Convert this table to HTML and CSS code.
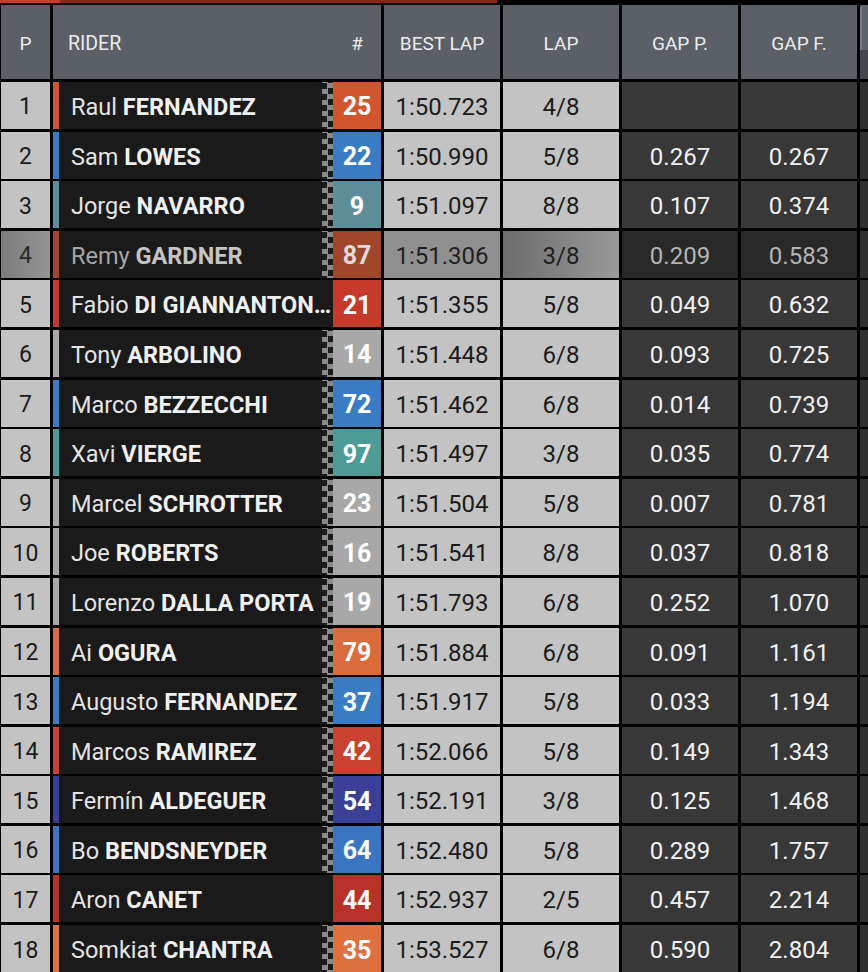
FILE: index.html
```html
<!DOCTYPE html>
<html lang="en">
<head>
<meta charset="utf-8">
<title>Timing</title>
<link rel="stylesheet" href="styles.css">
</head>
<body>
<div class="topbar"></div>
<div class="board">
  <div class="row head">
    <div class="hc">P</div>
    <div class="hc hrider"><span class="hlabel">RIDER</span><span class="hnum">#</span></div>
    <div class="hc">BEST LAP</div>
    <div class="hc">LAP</div>
    <div class="hc">GAP P.</div>
    <div class="hc">GAP F.</div>
    <div class="hc hextra"><span class="hextra-top"></span></div>
  </div>

  <div class="row t-ktm"><div class="pos">1</div><div class="rider"><span class="stripe"></span><div class="name"><span class="fn">Raul</span> FERNANDEZ</div><span class="chk"></span><span class="num">25</span></div><div class="lt">1:50.723</div><div class="lt">4/8</div><div class="dk"></div><div class="dk"></div><div class="ex"></div></div>
  <div class="row t-blue"><div class="pos">2</div><div class="rider"><span class="stripe"></span><div class="name"><span class="fn">Sam</span> LOWES</div><span class="chk"></span><span class="num">22</span></div><div class="lt">1:50.990</div><div class="lt">5/8</div><div class="dk">0.267</div><div class="dk">0.267</div><div class="ex"></div></div>
  <div class="row t-slate"><div class="pos">3</div><div class="rider"><span class="stripe"></span><div class="name"><span class="fn">Jorge</span> NAVARRO</div><span class="chk"></span><span class="num">9</span></div><div class="lt">1:51.097</div><div class="lt">8/8</div><div class="dk">0.107</div><div class="dk">0.374</div><div class="ex"></div></div>
  <div class="row t-dimorange dim"><div class="pos">4</div><div class="rider"><span class="stripe"></span><div class="name"><span class="fn">Remy</span> GARDNER</div><span class="chk"></span><span class="num">87</span></div><div class="lt">1:51.306</div><div class="lt lapdim">3/8</div><div class="dk">0.209</div><div class="dk">0.583</div><div class="ex"></div></div>
  <div class="row t-red nochk"><div class="pos">5</div><div class="rider"><span class="stripe"></span><div class="name"><span class="fn">Fabio</span> DI GIANNANTONIO</div><span class="chk"></span><span class="num">21</span></div><div class="lt">1:51.355</div><div class="lt">5/8</div><div class="dk">0.049</div><div class="dk">0.632</div><div class="ex"></div></div>
  <div class="row t-grey"><div class="pos">6</div><div class="rider"><span class="stripe"></span><div class="name"><span class="fn">Tony</span> ARBOLINO</div><span class="chk"></span><span class="num">14</span></div><div class="lt">1:51.448</div><div class="lt">6/8</div><div class="dk">0.093</div><div class="dk">0.725</div><div class="ex"></div></div>
  <div class="row t-blue"><div class="pos">7</div><div class="rider"><span class="stripe"></span><div class="name"><span class="fn">Marco</span> BEZZECCHI</div><span class="chk"></span><span class="num">72</span></div><div class="lt">1:51.462</div><div class="lt">6/8</div><div class="dk">0.014</div><div class="dk">0.739</div><div class="ex"></div></div>
  <div class="row t-teal"><div class="pos">8</div><div class="rider"><span class="stripe"></span><div class="name"><span class="fn">Xavi</span> VIERGE</div><span class="chk"></span><span class="num">97</span></div><div class="lt">1:51.497</div><div class="lt">3/8</div><div class="dk">0.035</div><div class="dk">0.774</div><div class="ex"></div></div>
  <div class="row t-grey"><div class="pos">9</div><div class="rider"><span class="stripe"></span><div class="name"><span class="fn">Marcel</span> SCHROTTER</div><span class="chk"></span><span class="num">23</span></div><div class="lt">1:51.504</div><div class="lt">5/8</div><div class="dk">0.007</div><div class="dk">0.781</div><div class="ex"></div></div>
  <div class="row t-grey"><div class="pos">10</div><div class="rider"><span class="stripe"></span><div class="name"><span class="fn">Joe</span> ROBERTS</div><span class="chk"></span><span class="num">16</span></div><div class="lt">1:51.541</div><div class="lt">8/8</div><div class="dk">0.037</div><div class="dk">0.818</div><div class="ex"></div></div>
  <div class="row t-grey"><div class="pos">11</div><div class="rider"><span class="stripe"></span><div class="name"><span class="fn">Lorenzo</span> DALLA PORTA</div><span class="chk"></span><span class="num">19</span></div><div class="lt">1:51.793</div><div class="lt">6/8</div><div class="dk">0.252</div><div class="dk">1.070</div><div class="ex"></div></div>
  <div class="row t-orange"><div class="pos">12</div><div class="rider"><span class="stripe"></span><div class="name"><span class="fn">Ai</span> OGURA</div><span class="chk"></span><span class="num">79</span></div><div class="lt">1:51.884</div><div class="lt">6/8</div><div class="dk">0.091</div><div class="dk">1.161</div><div class="ex"></div></div>
  <div class="row t-blue"><div class="pos">13</div><div class="rider"><span class="stripe"></span><div class="name"><span class="fn">Augusto</span> FERNANDEZ</div><span class="chk"></span><span class="num">37</span></div><div class="lt">1:51.917</div><div class="lt">5/8</div><div class="dk">0.033</div><div class="dk">1.194</div><div class="ex"></div></div>
  <div class="row t-red2"><div class="pos">14</div><div class="rider"><span class="stripe"></span><div class="name"><span class="fn">Marcos</span> RAMIREZ</div><span class="chk"></span><span class="num">42</span></div><div class="lt">1:52.066</div><div class="lt">5/8</div><div class="dk">0.149</div><div class="dk">1.343</div><div class="ex"></div></div>
  <div class="row t-navy"><div class="pos">15</div><div class="rider"><span class="stripe"></span><div class="name"><span class="fn">Fermín</span> ALDEGUER</div><span class="chk"></span><span class="num">54</span></div><div class="lt">1:52.191</div><div class="lt">3/8</div><div class="dk">0.125</div><div class="dk">1.468</div><div class="ex"></div></div>
  <div class="row t-blue2"><div class="pos">16</div><div class="rider"><span class="stripe"></span><div class="name"><span class="fn">Bo</span> BENDSNEYDER</div><span class="chk"></span><span class="num">64</span></div><div class="lt">1:52.480</div><div class="lt">5/8</div><div class="dk">0.289</div><div class="dk">1.757</div><div class="ex"></div></div>
  <div class="row t-red3 nochk"><div class="pos">17</div><div class="rider"><span class="stripe"></span><div class="name"><span class="fn">Aron</span> CANET</div><span class="chk"></span><span class="num">44</span></div><div class="lt">1:52.937</div><div class="lt">2/5</div><div class="dk">0.457</div><div class="dk">2.214</div><div class="ex"></div></div>
  <div class="row t-orange2"><div class="pos">18</div><div class="rider"><span class="stripe"></span><div class="name"><span class="fn">Somkiat</span> CHANTRA</div><span class="chk"></span><span class="num">35</span></div><div class="lt">1:53.527</div><div class="lt">6/8</div><div class="dk">0.590</div><div class="dk">2.804</div><div class="ex"></div></div>
</div>
</body>
</html>
```

FILE: styles.css
```css
html, body {
  margin: 0;
  padding: 0;
  background: #000;
}
body {
  width: 868px;
  height: 972px;
  overflow: hidden;
  font-family: Roboto, "Noto Sans", "Liberation Sans", sans-serif;
}
.topbar {
  width: 497px;
  height: 3px;
  margin-bottom: 2px;
  background: linear-gradient(90deg, #c63e2b 0, #c63e2b 60px, #8d2219 60px, #8d2219 100%);
}
.board {
  display: flex;
  flex-direction: column;
  gap: 2.6px;
}
.row {
  display: grid;
  grid-template-columns: 49px 328px 116px 116px 116px 116px 12px;
  column-gap: 3px;
  padding-left: 1px;
  height: 47px;
}
.row.head {
  height: 74.4px;
}
.hc {
  background: #5b5f66;
  color: #ececec;
  font-size: 19px;
  display: flex;
  align-items: center;
  justify-content: center;
  padding-top: 3px;
  box-sizing: border-box;
}
.hrider {
  justify-content: flex-start;
  padding-left: 15px;
}
.hlabel {
  flex: 1;
  font-size: 19.5px;
}
.hnum {
  width: 48px;
  text-align: center;
}
.hextra {
  background: #44474c;
  align-items: flex-start;
  justify-content: flex-start;
  padding: 0;
}
.hextra-top {
  display: block;
  width: 100%;
  height: 45px;
  background: #5f636a;
  border-left: 2px solid #7a7e85;
  border-radius: 4px 0 0 0;
  box-sizing: border-box;
}

.pos, .lt {
  background: #c3c3c3;
  color: #1b1b1b;
  display: flex;
  align-items: center;
  justify-content: center;
  padding-top: 3px;
  box-sizing: border-box;
}
.pos {
  font-size: 23px;
}
.lt {
  font-size: 24px;
}
.dk {
  background: #383838;
  color: #f1f1f1;
  font-size: 24px;
  display: flex;
  align-items: center;
  justify-content: center;
  padding-top: 3px;
  box-sizing: border-box;
}
.ex {
  background: #303030;
}
.rider {
  display: flex;
  background: #1a1a1a;
  min-width: 0;
}
.stripe {
  width: 6px;
  flex: none;
  background: var(--team);
}
.name {
  flex: 1;
  min-width: 0;
  padding-left: 12px;
  padding-top: 3px;
  white-space: nowrap;
  overflow: hidden;
  text-overflow: ellipsis;
  font-size: 23.5px;
  font-weight: 700;
  color: #f0f0f0;
  line-height: 44px;
}
.fn {
  font-weight: 400;
  color: #e4e4e4;
}
.chk {
  width: 11px;
  flex: none;
  background-color: #1a1a1a;
  background-image:
    conic-gradient(#8a8a8a 0 25%, transparent 0 50%, #8a8a8a 0 75%, transparent 0);
  background-size: 11px 11px;
  background-position: 0 1px;
}
.nochk .chk {
  display: none;
}
.num {
  width: 48px;
  flex: none;
  background: var(--team);
  color: #fff;
  font-weight: 700;
  font-size: 25px;
  display: flex;
  align-items: center;
  justify-content: center;
  padding-top: 3px;
  box-sizing: border-box;
}

/* dimmed row */
.dim .pos {
  background: linear-gradient(90deg, #7c7c7c, #959595);
  color: #2a2a2a;
}
.dim .lt {
  background: #8f8f8f;
  color: #1f1f1f;
}
.dim .lapdim {
  background: linear-gradient(90deg, #6c6c6c, #9a9a9a);
}
.dim .dk {
  background: #282828;
  color: #b4b4b4;
}
.dim .name {
  color: #c4c4c4;
}
.dim .fn {
  color: #a6a6a6;
}
.dim .num {
  color: #dcdcdc;
}

/* team colours */
.t-ktm { --team: #d2562d; }
.t-blue { --team: #3a7cc4; }
.t-blue2 { --team: #3975c1; }
.t-slate { --team: #5e8e99; }
.t-dimorange { --team: #a2462b; }
.t-red { --team: #c53a2b; }
.t-red2 { --team: #c9412f; }
.t-red3 { --team: #b73228; }
.t-grey { --team: #a8a8a8; }
.t-teal { --team: #4c9b94; }
.t-orange { --team: #d96b3d; }
.t-orange2 { --team: #df713f; }
.t-navy { --team: #3a3f98; }
```
